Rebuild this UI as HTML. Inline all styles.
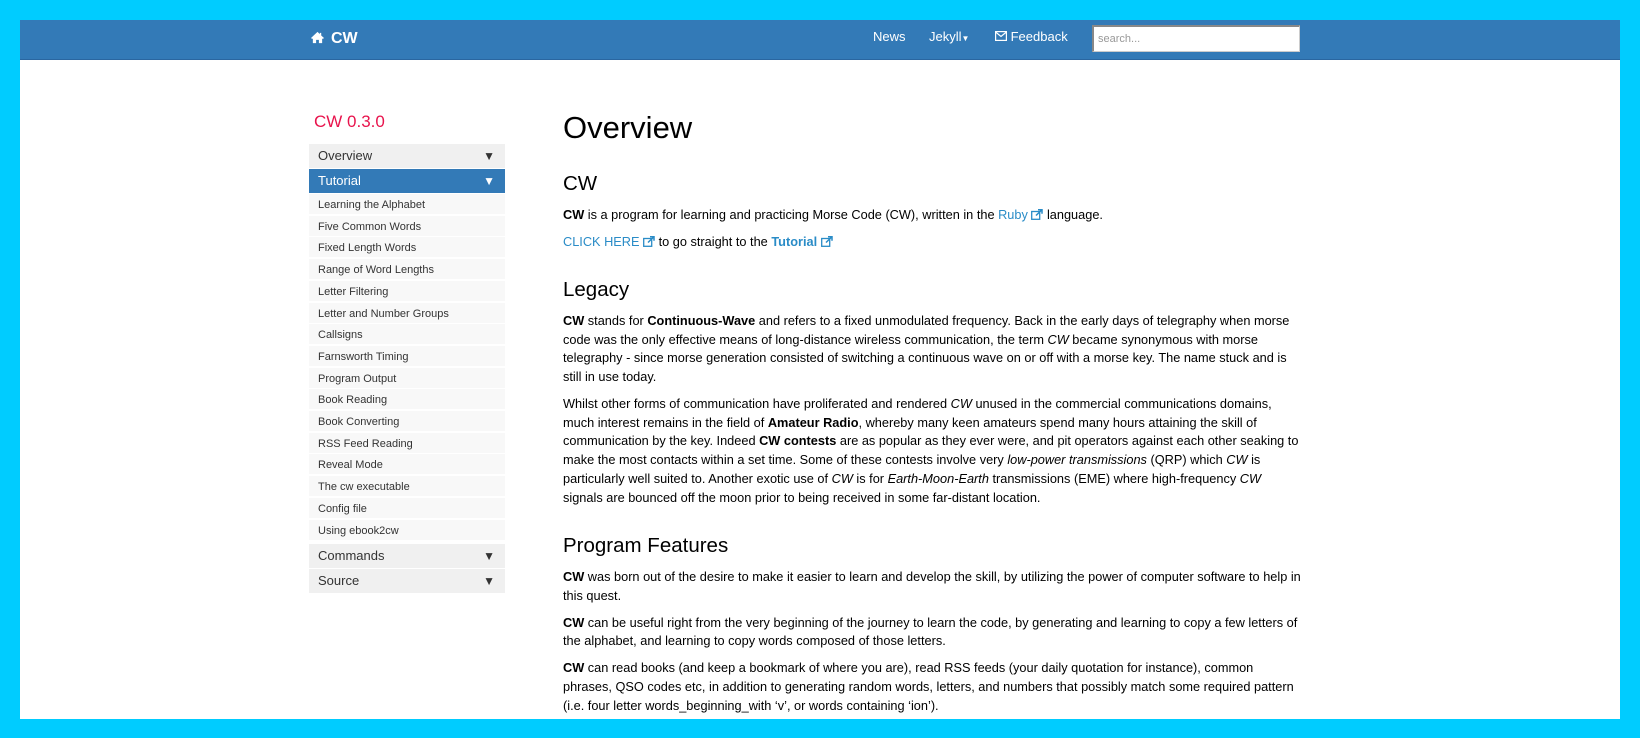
<!DOCTYPE html>
<html><head><meta charset="utf-8"><style>
*{box-sizing:border-box;margin:0;padding:0}
body{width:1640px;height:738px;background:#00ccff;overflow:hidden;font-family:"Liberation Sans",Arial,sans-serif;color:#000}
#page{position:absolute;left:20px;top:20px;width:1600px;height:699px;background:#fff;overflow:hidden}
#nav{position:absolute;left:0;top:0;width:1600px;height:40px;background:#337ab7;border-bottom:1px solid #2a66a0;color:#fff}
#nav .brand{position:absolute;left:290px;top:10px;font-size:16px;font-weight:bold}
#nav .lnk{position:absolute;top:9px;font-size:13px}
#search{position:absolute;left:1072px;top:5px;width:208px;height:27px;background:#fff;border:1px solid #ccc;border-top:2px solid #888;border-left:2px solid #888;font-size:11px;color:#999;padding:6px 4px}
#side{position:absolute;left:289px;top:0;width:196px}
#side .title{position:absolute;top:92px;left:5px;color:#e8134c;font-size:17px}
.m{position:absolute;left:0;width:196px;height:24px;background:#f0f0f0;font-size:13px;padding:4px 9px;color:#333}
.m span{position:absolute;right:10px;top:5px;font-size:12px}
.m.act{background:#337ab7;color:#fff}
.s{position:absolute;left:0;width:196px;height:21px;background:#f8f8f8;border-bottom:1px solid #fff;font-size:11px;padding:5px 9px 0;color:#333}
#main{position:absolute;left:543px;top:0;width:740px;font-size:12.75px;line-height:18.7px}
h1{font-weight:normal;font-size:31px;line-height:40px;margin-top:88px;margin-bottom:23px}
h2{font-weight:normal;font-size:20.5px;line-height:26px;margin-top:26px;margin-bottom:8.6px}
h1+h2{margin-top:0}
p{margin-bottom:8.3px}
a{color:#2a8cc7;text-decoration:none}
.ext{display:inline-block;width:12px;height:11px;vertical-align:-1px}
</style></head><body><div id="page">
<div id="nav">
<div class="brand"><svg width="15" height="13" viewBox="0 0 16 14" style="vertical-align:-1px;margin-right:6px"><path d="M8 1 L1 7.5 L2.3 8.6 L3 8 V13 H6.5 V9.5 H9.5 V13 H13 V8 L13.7 8.6 L15 7.5 L12 4.8 V2 H10.5 V3.4 Z" fill="#fff"/></svg>CW</div>
<div class="lnk" style="left:853px">News</div>
<div class="lnk" style="left:909px">Jekyll<span style="font-size:8px">▼</span></div>
<div class="lnk" style="left:975px"><svg width="12" height="10" viewBox="0 0 12 10" style="vertical-align:0"><rect x="0.6" y="0.6" width="10.8" height="8.8" fill="none" stroke="#fff" stroke-width="1.2"/><path d="M0.6 1 L6 5.5 L11.4 1" fill="none" stroke="#fff" stroke-width="1.2"/></svg> Feedback</div>
<div id="search">search...</div>
</div>
<div id="side">
<div class="title">CW 0.3.0</div>
<div class="m" style="top:124px">Overview<span>▼</span></div>
<div class="m act" style="top:149px">Tutorial<span>▼</span></div>
<div class="s" style="top:174px">Learning the Alphabet</div>
<div class="s" style="top:195.7px">Five Common Words</div>
<div class="s" style="top:217.4px">Fixed Length Words</div>
<div class="s" style="top:239.1px">Range of Word Lengths</div>
<div class="s" style="top:260.8px">Letter Filtering</div>
<div class="s" style="top:282.5px">Letter and Number Groups</div>
<div class="s" style="top:304.2px">Callsigns</div>
<div class="s" style="top:325.9px">Farnsworth Timing</div>
<div class="s" style="top:347.6px">Program Output</div>
<div class="s" style="top:369.3px">Book Reading</div>
<div class="s" style="top:391px">Book Converting</div>
<div class="s" style="top:412.7px">RSS Feed Reading</div>
<div class="s" style="top:434.4px">Reveal Mode</div>
<div class="s" style="top:456.1px">The cw executable</div>
<div class="s" style="top:477.8px">Config file</div>
<div class="s" style="top:499.5px">Using ebook2cw</div>
<div class="m" style="top:524px">Commands<span>▼</span></div>
<div class="m" style="top:549px">Source<span>▼</span></div>
</div>
<div id="main">
<h1>Overview</h1>
<h2>CW</h2>
<p><b>CW</b> is a program for learning and practicing Morse Code (CW), written in the <a>Ruby <svg class="ext" viewBox="0 0 12 11"><rect x="0.7" y="2.5" width="8" height="7.8" fill="none" stroke="#2a8cc7" stroke-width="1.3"/><path d="M5 6.5 L11 0.7 M7 0.7 H11 V4.7" fill="none" stroke="#2a8cc7" stroke-width="1.5"/></svg></a> language.</p>
<p><a>CLICK HERE <svg class="ext" viewBox="0 0 12 11"><rect x="0.7" y="2.5" width="8" height="7.8" fill="none" stroke="#2a8cc7" stroke-width="1.3"/><path d="M5 6.5 L11 0.7 M7 0.7 H11 V4.7" fill="none" stroke="#2a8cc7" stroke-width="1.5"/></svg></a> to go straight to the <a><b>Tutorial</b> <svg class="ext" viewBox="0 0 12 11"><rect x="0.7" y="2.5" width="8" height="7.8" fill="none" stroke="#2a8cc7" stroke-width="1.3"/><path d="M5 6.5 L11 0.7 M7 0.7 H11 V4.7" fill="none" stroke="#2a8cc7" stroke-width="1.5"/></svg></a></p>
<h2>Legacy</h2>
<p><b>CW</b> stands for <b>Continuous-Wave</b> and refers to a fixed unmodulated frequency. Back in the early days of telegraphy when morse code was the only effective means of long-distance wireless communication, the term <i>CW</i> became synonymous with morse telegraphy - since morse generation consisted of switching a continuous wave on or off with a morse key. The name stuck and is still in use today.</p>
<p>Whilst other forms of communication have proliferated and rendered <i>CW</i> unused in the commercial communications domains, much interest remains in the field of <b>Amateur Radio</b>, whereby many keen amateurs spend many hours attaining the skill of communication by the key. Indeed <b>CW contests</b> are as popular as they ever were, and pit operators against each other seaking to make the most contacts within a set time. Some of these contests involve very <i>low-power transmissions</i> (QRP) which <i>CW</i> is particularly well suited to. Another exotic use of <i>CW</i> is for <i>Earth-Moon-Earth</i> transmissions (EME) where high-frequency <i>CW</i> signals are bounced off the moon prior to being received in some far-distant location.</p>
<h2>Program Features</h2>
<p><b>CW</b> was born out of the desire to make it easier to learn and develop the skill, by utilizing the power of computer software to help in this quest.</p>
<p><b>CW</b> can be useful right from the very beginning of the journey to learn the code, by generating and learning to copy a few letters of the alphabet, and learning to copy words composed of those letters.</p>
<p><b>CW</b> can read books (and keep a bookmark of where you are), read RSS feeds (your daily quotation for instance), common phrases, QSO codes etc, in addition to generating random words, letters, and numbers that possibly match some required pattern (i.e. four letter words_beginning_with ‘v’, or words containing ‘ion’).</p>
</div>
</div></body></html>
